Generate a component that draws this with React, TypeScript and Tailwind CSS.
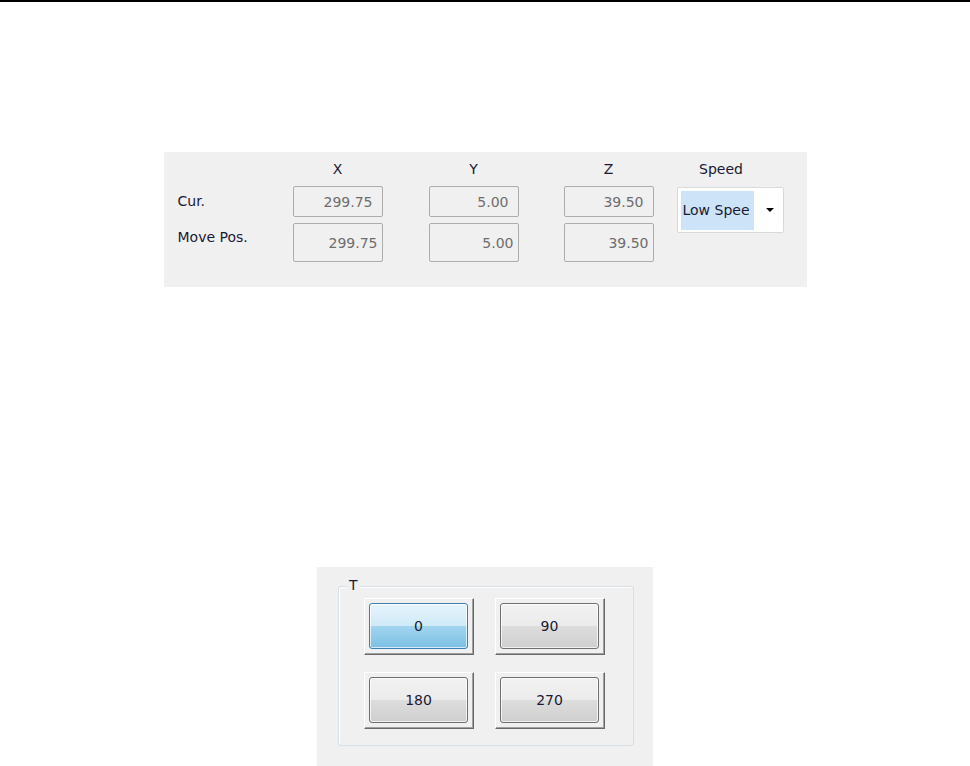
import React from "react";

const axes = [
  { name: "X", cur: "299.75", move: "299.75", gap: "mr-[46px]" },
  { name: "Y", cur: "5.00", move: "5.00", gap: "mr-[45px]" },
  { name: "Z", cur: "39.50", move: "39.50", gap: "mr-[23px]" },
];

const angles = ["0", "90", "180", "270"];

function ValueBox({ value, tall }: { value: string; tall?: boolean }) {
  return (
    <div
      className={`flex items-center justify-end rounded-[2px] border border-[#adadad] bg-[#f0f0f0] text-[#6d6d6d] ${
        tall ? "mt-[6px] h-[39px] pr-[4px]" : "mt-[9px] h-[31px] pr-[9px]"
      }`}
    >
      {value}
    </div>
  );
}

function AngleButton({ label, active }: { label: string; active?: boolean }) {
  return (
    <div className="h-[57px] w-[110px] border border-t-white border-l-white border-r-[#696969] border-b-[#696969] pt-[4px] pb-[5px] pl-[4px] pr-[5px] shadow-[inset_-1px_-1px_0_#a0a0a0]">
      <button
        className={`flex h-full w-full items-center justify-center rounded-[3px] border text-[#1a1a33] shadow-[inset_0_0_0_1px_rgba(255,255,255,0.7)] ${
          active
            ? "border-[#3c7fb1] bg-[linear-gradient(to_bottom,#e5f4fc_0%,#cfeaf8_50%,#a3d5f0_50%,#7cbfe3_100%)]"
            : "border-[#707070] bg-[linear-gradient(to_bottom,#f2f2f2_0%,#ebebeb_50%,#dddddd_50%,#cfcfcf_100%)]"
        }`}
      >
        {label}
      </button>
    </div>
  );
}

export default function App() {
  return (
    <div className="w-full bg-white font-['DejaVu_Sans',sans-serif] text-[14px] leading-4 text-[#1a1a33]">
      <div className="h-[2px] bg-black" />

      <div className="flex flex-col items-center">
        {/* Position panel */}
        <div className="mt-[150px] flex h-[135px] w-[643px] bg-[#f0f0f0] pl-[14px] pt-[9px]">
          <div className="w-[115px] pt-[32px]">
            <div>Cur.</div>
            <div className="mt-[20px]">Move Pos.</div>
          </div>

          {axes.map((a) => (
            <div key={a.name} className={`w-[90px] ${a.gap}`}>
              <div className="h-4 text-center">{a.name}</div>
              <ValueBox value={a.cur} />
              <ValueBox value={a.move} tall />
            </div>
          ))}

          <div className="w-[107px]">
            <div className="h-4 pr-[18px] text-center">Speed</div>
            <div className="mt-[10px] flex h-[46px] items-center rounded-[2px] border border-[#d9d9d9] bg-white pl-[3px]">
              <span className="flex h-[39px] w-[73px] items-center bg-[#cce3f8] pl-[2px]">
                Low Spee
              </span>
              <svg width="8" height="4" viewBox="0 0 8 4" className="ml-[12px]">
                <path d="M0 0h8L4 4z" fill="#000" />
              </svg>
            </div>
          </div>
        </div>

        {/* Rotation panel */}
        <div className="mt-[280px] h-[199px] w-[336px] bg-[#f0f0f0] pl-[21px] pt-[19px]">
          <div className="relative h-[160px] w-[296px] rounded-[3px] border border-[#d5dfe5] pl-[25px] pt-[11px] shadow-[inset_1px_1px_0_#ffffff]">
            <span className="absolute -top-[10px] left-[8px] bg-[#f0f0f0] px-[2px]">T</span>
            <div className="grid grid-cols-[110px_110px] gap-x-[21px] gap-y-[17px]">
              {angles.map((a, i) => (
                <AngleButton key={a} label={a} active={i === 0} />
              ))}
            </div>
          </div>
        </div>
      </div>
    </div>
  );
}
